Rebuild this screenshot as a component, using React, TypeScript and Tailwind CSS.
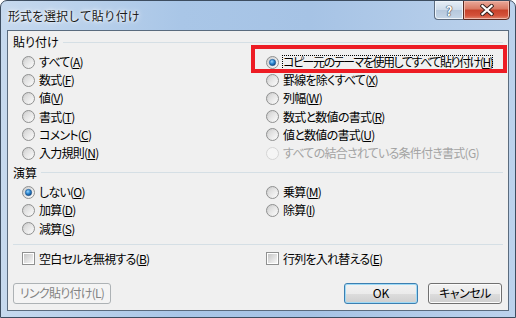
const jp = "font-['Noto_Sans_CJK_JP','Noto_Sans',sans-serif] [font-feature-settings:'palt']";

function Radio({ checked = false, disabled = false }: { checked?: boolean; disabled?: boolean }) {
  return (
    <svg width="13" height="13" viewBox="0 0 13 13" className="shrink-0">
      <defs>
        <linearGradient id="rOuter" x1="0" y1="0" x2="1" y2="1">
          <stop offset="0" stopColor="#c9c9c9" />
          <stop offset="1" stopColor="#ffffff" />
        </linearGradient>
        <linearGradient id="rInner" x1="0" y1="0" x2="1" y2="1">
          <stop offset="0" stopColor="#d6d6d6" />
          <stop offset="1" stopColor="#f8f8f8" />
        </linearGradient>
        <radialGradient id="rDot" cx="0.4" cy="0.35" r="0.7">
          <stop offset="0" stopColor="#9ad6ff" />
          <stop offset="0.5" stopColor="#2a86d0" />
          <stop offset="1" stopColor="#0d3f7a" />
        </radialGradient>
      </defs>
      {disabled ? (
        <circle cx="6.5" cy="6.5" r="6" fill="#f5f5f5" stroke="#d4d4d4" />
      ) : (
        <>
          <circle cx="6.5" cy="6.5" r="6" fill="url(#rOuter)" stroke="#8f9090" />
          <circle cx="6.5" cy="6.5" r="4" fill="url(#rInner)" />
          {checked && <circle cx="6.5" cy="6.5" r="3.2" fill="url(#rDot)" stroke="#1c4f86" strokeWidth="0.5" />}
        </>
      )}
    </svg>
  );
}

function Check() {
  return (
    <svg width="13" height="13" viewBox="0 0 13 13" className="shrink-0">
      <defs>
        <linearGradient id="cIn" x1="0" y1="0" x2="1" y2="1">
          <stop offset="0" stopColor="#c6c6c6" />
          <stop offset="1" stopColor="#f7f7f7" />
        </linearGradient>
      </defs>
      <rect x="0.5" y="0.5" width="12" height="12" fill="#ffffff" stroke="#8f9090" />
      <rect x="2" y="2" width="9" height="9" fill="url(#cIn)" />
    </svg>
  );
}

function Label({ text, k, tight }: { text: string; k: string; tight?: boolean }) {
  return (
    <span className={`whitespace-nowrap ${tight ? "tracking-[-1.45px]" : "tracking-[-0.75px]"}`}>
      {text}(<span className="underline underline-offset-[1px]">{k}</span>)
    </span>
  );
}

function Opt({ text, k, checked, disabled }: { text: string; k: string; checked?: boolean; disabled?: boolean }) {
  return (
    <div className="flex items-center gap-[4px] h-[18.2px]">
      <Radio checked={checked} disabled={disabled} />
      {disabled ? (
        <span className="text-[#a3a3a3] whitespace-nowrap tracking-[-0.75px]">{`${text}(${k})`}</span>
      ) : (
        <Label text={text} k={k} />
      )}
    </div>
  );
}

function Header({ text, h }: { text: string; h: string }) {
  return (
    <div className={`flex items-center px-[5px] ${h}`}>
      <span>{text}</span>
      <div className="flex-1 h-px bg-[#d5dfe5] ml-[4px]" />
    </div>
  );
}

export default function App() {
  return (
    <div className={`w-[516px] h-[318px] flex flex-col border border-[#3d4d60] rounded-t-[7px] overflow-hidden bg-[linear-gradient(90deg,#c6d9ee_0%,#a9c6e7_35%,#a6c3e5_60%,#bcd2ec_100%)] text-[12px] leading-none text-black ${jp}`}>
      <div className="h-[29px] shrink-0 flex items-start justify-between pl-[7px] pr-[5px]">
        <span className="mt-[9px] text-[12px] text-[#1a1a1a] [font-feature-settings:normal] [text-shadow:0_0_6px_#ffffff,0_0_3px_#ffffff]">形式を選択して貼り付け</span>
        <div className="flex -mt-px">
          <div className="w-[29px] h-[20px] flex items-center justify-center border border-[#5d6d80] border-r-0 rounded-bl-[4px] bg-[linear-gradient(#e6eef6_0%,#cddbea_50%,#b6c8dc_51%,#c6d6e7_100%)] shadow-[inset_0_0_0_1px_#eef4fa]">
            <span className="text-white font-bold text-[13px] leading-none [text-shadow:0_0_1px_#35404e,0_0_1px_#35404e,0_0_1px_#35404e]">?</span>
          </div>
          <div className="w-[47px] h-[20px] flex items-center justify-center border border-[#5a2a22] rounded-br-[4px] bg-[linear-gradient(#e9a99a_0%,#d97862_45%,#c7412a_50%,#d4513a_80%,#e0866f_100%)] shadow-[inset_0_0_0_1px_#f0b8aa]">
            <svg width="14" height="12" viewBox="0 0 14 12">
              <path d="M2.5 2 L11.5 10 M11.5 2 L2.5 10" stroke="#3a2420" strokeWidth="4.2" strokeLinecap="square" />
              <path d="M2.5 2 L11.5 10 M11.5 2 L2.5 10" stroke="#ffffff" strokeWidth="2.3" strokeLinecap="square" />
            </svg>
          </div>
        </div>
      </div>

      <div className="flex-1 mx-[6px] mb-[6px] border border-[#5a6b7e] bg-[#f0f0f0] flex flex-col">
        <Header text="貼り付け" h="h-[22px]" />
        <div className="grid grid-cols-[244px_1fr] pl-[14px]">
          <div className="flex flex-col">
            <Opt text="すべて" k="A" />
            <Opt text="数式" k="F" />
            <Opt text="値" k="V" />
            <Opt text="書式" k="T" />
            <Opt text="コメント" k="C" />
            <Opt text="入力規則" k="N" />
          </div>
          <div className="flex flex-col">
            <div className="relative flex items-center gap-[4px] h-[18.2px]">
              <div className="absolute left-[-15px] top-[-8px] w-[256px] h-[28px] border-[4px] border-[#ed1c24]" />
              <Radio checked />
              <span className="border border-dotted border-black -ml-px h-[15px] flex items-center whitespace-nowrap">
                <Label text="コピー元のテーマを使用してすべて貼り付け" k="H" tight />
              </span>
            </div>
            <Opt text="罫線を除くすべて" k="X" />
            <Opt text="列幅" k="W" />
            <Opt text="数式と数値の書式" k="R" />
            <Opt text="値と数値の書式" k="U" />
            <Opt text="すべての結合されている条件付き書式" k="G" disabled />
          </div>
        </div>

        <Header text="演算" h="h-[21px]" />
        <div className="grid grid-cols-[244px_1fr] pl-[14px]">
          <div className="flex flex-col">
            <Opt text="しない" k="O" checked />
            <Opt text="加算" k="D" />
            <Opt text="減算" k="S" />
          </div>
          <div className="flex flex-col">
            <Opt text="乗算" k="M" />
            <Opt text="除算" k="I" />
          </div>
        </div>

        <div className="mt-[6px] mx-[5px] h-px bg-[#d5dfe5]" />

        <div className="grid grid-cols-[244px_1fr] pl-[14px] mt-[5px] h-[18px]">
          <div className="flex items-center gap-[4px]">
            <Check />
            <Label text="空白セルを無視する" k="B" />
          </div>
          <div className="flex items-center gap-[4px]">
            <Check />
            <Label text="行列を入れ替える" k="E" />
          </div>
        </div>

        <div className="flex items-center mt-[15px] pl-[5px] pr-[6px]">
          <div className="w-[98px] h-[21px] flex items-center justify-center border border-[#adb2b5] rounded-[3px] bg-[#f4f4f4] text-[#838383] tracking-[-0.75px]">
            リンク貼り付け(L)
          </div>
          <div className="flex-1" />
          <div className="w-[74px] h-[21px] flex items-center justify-center border border-[#3c7fb1] rounded-[3px] bg-[linear-gradient(#f2f2f2_0%,#ebebeb_50%,#dddddd_50%,#cfcfcf_100%)] shadow-[inset_0_0_0_1px_#9fdaf6]">
            OK
          </div>
          <div className="w-[74px] h-[21px] ml-[10px] flex items-center justify-center border border-[#707070] rounded-[3px] bg-[linear-gradient(#f2f2f2_0%,#ebebeb_50%,#dddddd_50%,#cfcfcf_100%)] shadow-[inset_0_0_0_1px_#fbfbfb] tracking-[-0.5px]">
            キャンセル
          </div>
        </div>
      </div>
    </div>
  );
}
